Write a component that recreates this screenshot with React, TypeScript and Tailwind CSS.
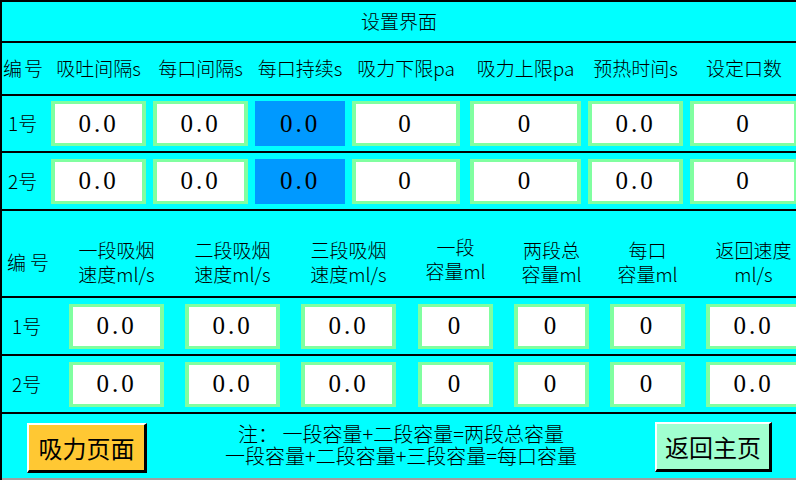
const cjk = { fontFamily: '"Noto Sans CJK SC", "Noto Sans", sans-serif' };
const num = { fontFamily: '"Liberation Serif", "Noto Sans CJK SC", serif' };

type Col = { ml: number; w: number };

// box geometry measured from the panel, section 1 and section 2
const topCols: Col[] = [
  { ml: 0, w: 95 },
  { ml: 7, w: 95 },
  { ml: 7, w: 90 },
  { ml: 7, w: 108 },
  { ml: 10, w: 111 },
  { ml: 7, w: 95 },
  { ml: 7, w: 108 },
];

const lowCols: Col[] = [
  { ml: 0, w: 95 },
  { ml: 21, w: 95 },
  { ml: 21, w: 95 },
  { ml: 22, w: 75 },
  { ml: 21, w: 75 },
  { ml: 21, w: 75 },
  { ml: 21, w: 95 },
];

const topHeads = ["吸吐间隔s", "每口间隔s", "每口持续s", "吸力下限pa", "吸力上限pa", "预热时间s", "设定口数"];
const topVals = ["0.0", "0.0", "0.0", "0", "0", "0.0", "0"];

const lowHeads: [string, string][] = [
  ["一段吸烟", "速度ml/s"],
  ["二段吸烟", "速度ml/s"],
  ["三段吸烟", "速度ml/s"],
  ["一段", "容量ml"],
  ["两段总", "容量ml"],
  ["每口", "容量ml"],
  ["返回速度", "ml/s"],
];
const lowVals = ["0.0", "0.0", "0.0", "0", "0", "0", "0.0"];

function ValueBox({ col, value, active }: { col: Col; value: string; active?: boolean }) {
  return (
    <div
      className={`shrink-0 h-[45px] flex items-center justify-center text-[25px] text-black tracking-[3px] ${
        active ? "bg-[#0099ff]" : "bg-white border-x-4 border-y-[3px] border-[#80ffa0]"
      }`}
      style={{ ...num, marginLeft: col.ml, width: col.w }}
    >
      {value}
    </div>
  );
}

function Row({ label, cols, vals, labelW, pl, h, blue }: { label: string; cols: Col[]; vals: string[]; labelW: number; pl: number; h: number; blue?: number }) {
  return (
    <div className="flex items-center border-b-2 border-black" style={{ height: h }}>
      <div className="shrink-0 text-[19px] font-light" style={{ width: labelW, paddingLeft: pl }}>
        {label}
      </div>
      {cols.map((c, i) => (
        <ValueBox key={i} col={c} value={vals[i]} active={i === blue} />
      ))}
    </div>
  );
}

export default function App() {
  return (
    <div
      className="w-[796px] h-[480px] overflow-hidden bg-[#00ffff] border-l-2 border-t-2 border-black text-black"
      style={cjk}
    >
      {/* title */}
      <div className="h-[41px] border-b-2 border-black flex items-center justify-center text-[19px] font-light">
        设置界面
      </div>

      {/* section 1 header */}
      <div className="h-[53px] border-b-2 border-black flex items-center text-[19px] font-light whitespace-nowrap">
        <div className="w-[49px] shrink-0 pl-[1px] tracking-[2px]">编号</div>
        {topCols.map((c, i) => (
          <div key={i} className="shrink-0 text-center" style={{ marginLeft: c.ml, width: c.w }}>
            {topHeads[i]}
          </div>
        ))}
      </div>

      <Row label="1号" cols={topCols} vals={topVals} labelW={49} pl={6} h={57} blue={2} />
      <Row label="2号" cols={topCols} vals={topVals} labelW={49} pl={6} h={58} blue={2} />

      {/* section 2 header */}
      <div className="h-[87px] border-b-2 border-black flex items-center pt-[17px] text-[19px] font-light leading-[24px] whitespace-nowrap">
        <div className="w-[67px] shrink-0 pl-[5px] tracking-[4px]">编号</div>
        {lowCols.map((c, i) => (
          <div
            key={i}
            className={`shrink-0 flex flex-col items-center ${i === 3 ? "mb-[6px]" : ""}`}
            style={{ marginLeft: c.ml, width: c.w }}
          >
            <span>{lowHeads[i][0]}</span>
            <span>{lowHeads[i][1]}</span>
          </div>
        ))}
      </div>

      <Row label="1号" cols={lowCols} vals={lowVals} labelW={67} pl={10} h={58} />
      <Row label="2号" cols={lowCols} vals={lowVals} labelW={67} pl={10} h={58} />

      {/* footer */}
      <div className="h-[66px] border-b-2 border-[#a0a0a0] flex items-center pb-[2px]">
        <button className="ml-[25px] w-[120px] h-[50px] shrink-0 bg-[#ffc833] border-t-2 border-l-2 border-white border-r-[3px] border-b-[3px] border-r-black border-b-black text-[24px] mt-[6px]">
          吸力页面
        </button>
        <div className="flex-1 flex flex-col items-center text-[20px] font-light leading-[22px] whitespace-nowrap">
          <span>注：&nbsp;一段容量+二段容量=两段总容量</span>
          <span>一段容量+二段容量+三段容量=每口容量</span>
        </div>
        <button className="mr-[24px] w-[117px] h-[50px] shrink-0 bg-[#a0ffd0] border-t-2 border-l-2 border-white border-r-[3px] border-b-[3px] border-r-black border-b-black text-[24px] mt-[4px]">
          返回主页
        </button>
      </div>
    </div>
  );
}
